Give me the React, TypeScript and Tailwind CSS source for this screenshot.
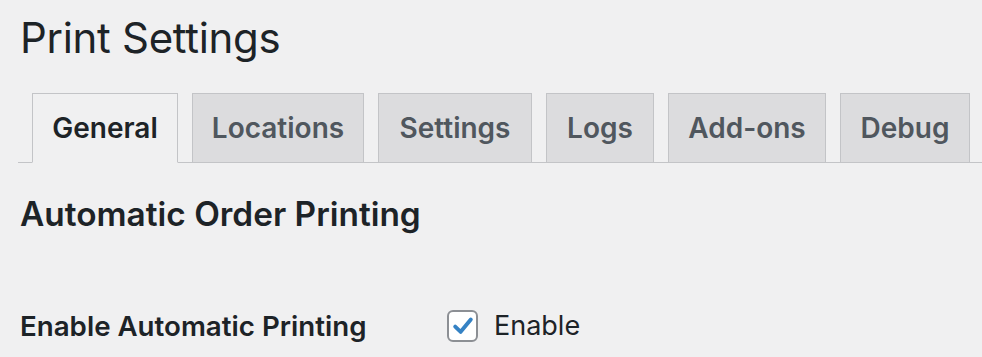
import React from "react";

const tabs = [
  { t: "General", w: "w-[146px]" },
  { t: "Locations", w: "w-[172px]" },
  { t: "Settings", w: "w-[154px]" },
  { t: "Logs", w: "w-[108px]" },
  { t: "Add-ons", w: "w-[158px]" },
  { t: "Debug", w: "w-[130px]" },
];

export default function App() {
  return (
    <div
      className="w-[982px] h-[357px] overflow-hidden bg-[#f0f0f1] text-[#1d2327] pl-[18px]"
      style={{ fontFamily: "Inter, 'Liberation Sans', sans-serif" }}
    >
      <h1 className="pl-[2px] pt-[12px] text-[42px] leading-[52px] font-normal tracking-[-0.3px]">Print Settings</h1>
      <nav className="mt-[29px] flex border-b border-[#c3c4c7]">
        {tabs.map((x, i) => (
          <div
            key={x.t}
            className={
              (i === 0
                ? "border-b-[#f0f0f1] bg-[#f0f0f1] text-[#1d2327] "
                : "bg-[#dcdcde] text-[#50575e] ") +
              x.w +
              " ml-[14px] -mb-px h-[70px] flex items-center justify-center border border-[#c3c4c7] text-[28px] font-semibold"
            }
          >
            {x.t}
          </div>
        ))}
      </nav>
      <h2 className="pl-[2px] mt-[31px] text-[33.4px] leading-[40px] font-semibold">Automatic Order Printing</h2>
      <div className="pl-[2px] mt-[74px] flex items-center">
        <div className="w-[427px] text-[27.7px] leading-[36px] font-semibold">Enable Automatic Printing</div>
        <label className="flex items-center gap-[16px] text-[27px] leading-[36px]">
          <span className="w-[31px] h-[32px] rounded-[6px] border-2 border-[#8c8f94] bg-white flex items-center justify-center">
            <svg viewBox="0 0 20 20" className="w-[26px] h-[26px]">
              <path d="M4 10.5 L8.2 14.5 L16 5" fill="none" stroke="#3582c4" strokeWidth="3" strokeLinecap="round" strokeLinejoin="round" />
            </svg>
          </span>
          Enable
        </label>
      </div>
    </div>
  );
}
